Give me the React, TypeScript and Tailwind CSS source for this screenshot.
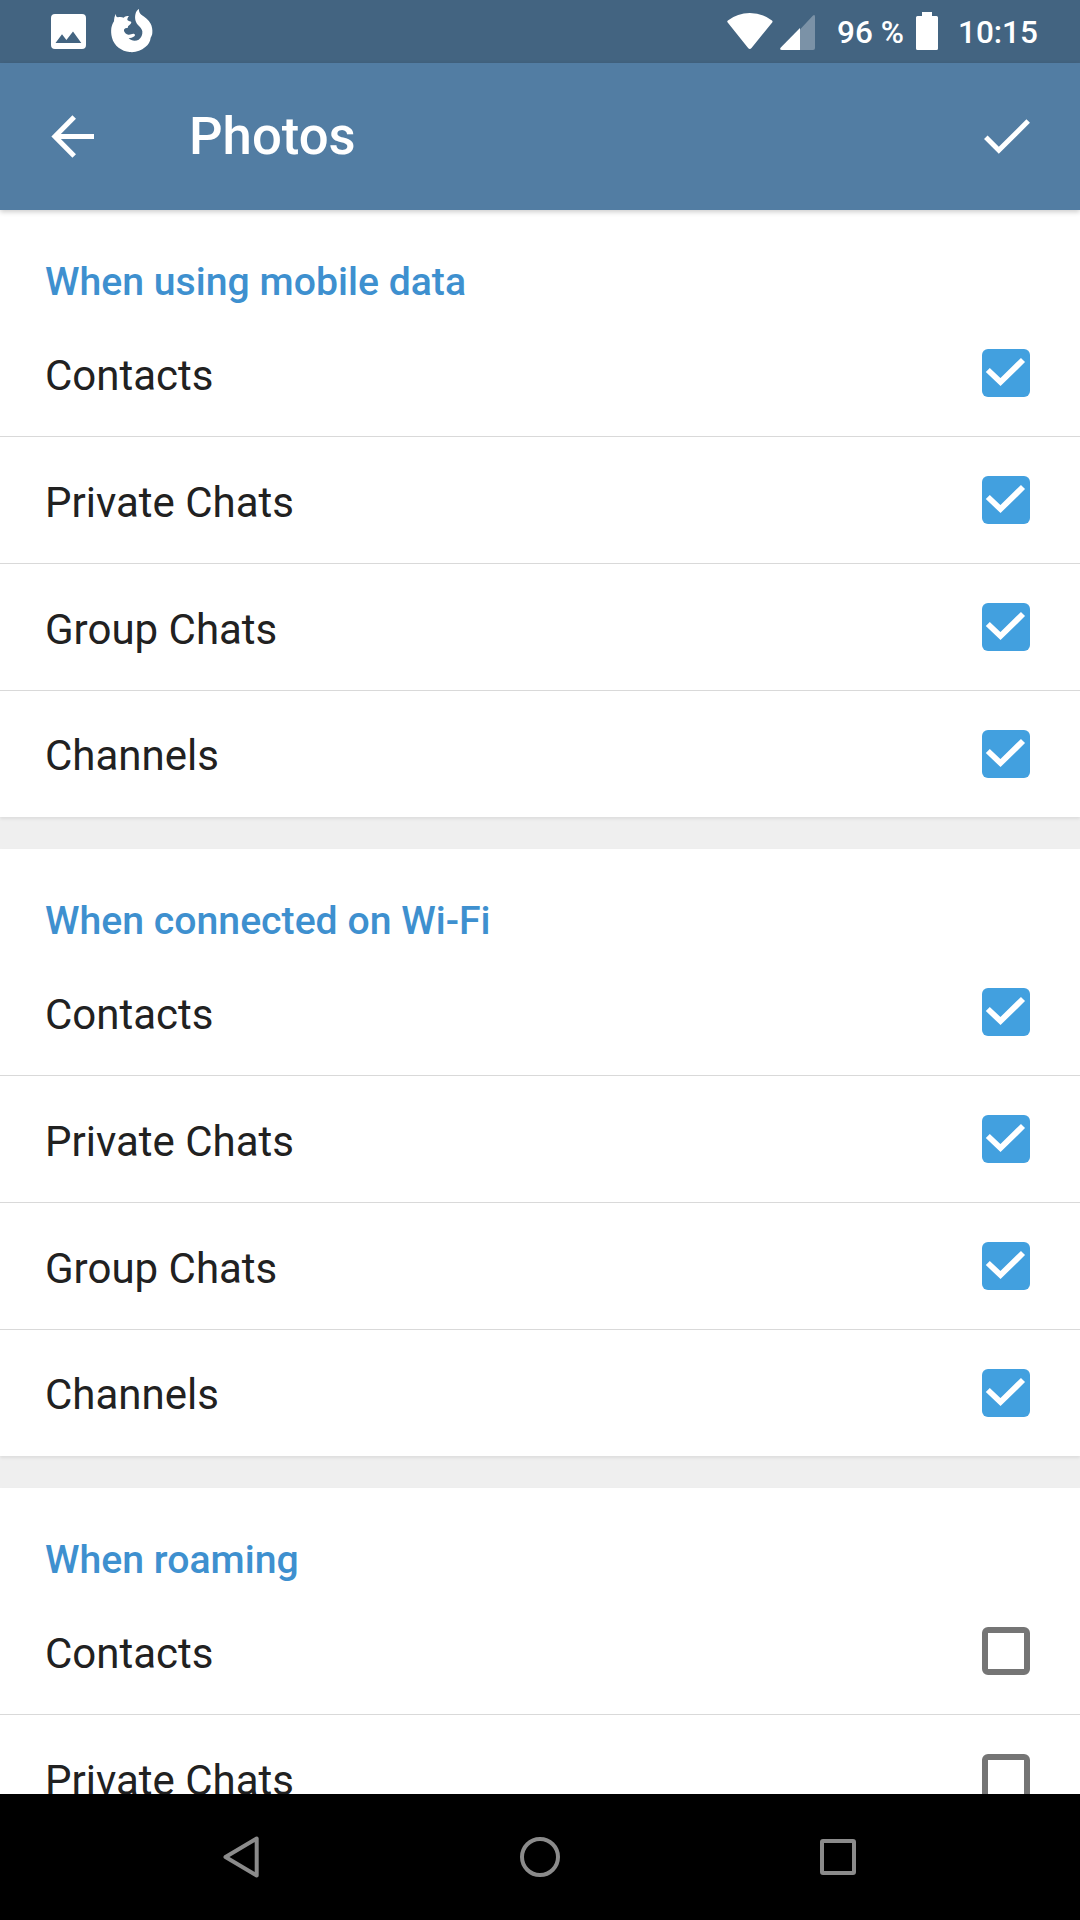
const CHATS = ['Contacts', 'Private Chats', 'Group Chats', 'Channels'];

const SECTIONS = [
  { title: 'When using mobile data', checked: true },
  { title: 'When connected on Wi-Fi', checked: true },
  { title: 'When roaming', checked: false },
];

function StatusBar() {
  return (
    <div className="flex h-[63px] shrink-0 items-start bg-[#436481] text-white">
      <svg className="ml-[51px] mt-[14px] h-[35px] w-[35px]" viewBox="0 0 35 35" fill="currentColor">
        <path
          fillRule="evenodd"
          d="M4 0h27a4 4 0 0 1 4 4v27a4 4 0 0 1-4 4H4a4 4 0 0 1-4-4V4a4 4 0 0 1 4-4zM4.500 29h25.800L22 17.500l-6.600 8.600L11 20.300z"
        />
      </svg>
      <svg className="ml-[25px] mt-[9px] h-[44px] w-[42px]" viewBox="0 0 126 132" fill="currentColor">
        <path d="M15 14C14 20 16 24 21 25C27 23 33 24 38 26C42 22 48 21 54 21C50 25 49 29 49 33C53 37 59 37 61 39C61 45 56 47 51 52C51 57 50 57 47 57C41 58 38 61 39 66C41 72 46 76 52 77C59 78 63 73 70 75C73 77 72 80 70 82C66 86 58 87 53 88C61 96 74 97 83 92C91 87 95 77 94 67C93 60 87 54 81 48C72 39 70 24 75 10C77 5 81 2 84 0C83 7 86 14 92 18C102 25 113 32 119 44C123 52 125 62 124 71C124 77 121 82 119 86C118 97 112 108 103 114C90 125 73 131 56 129C32 127 9 110 3 86C0 75 0 66 1 57C3 49 5 43 9 37C9 29 11 20 15 14Z" />
      </svg>
      <svg className="ml-[574px] mt-[13px] h-[37px] w-[46px]" viewBox="0 0 46 37" fill="currentColor">
        <path d="M.7 9.500Q-.3 8.500.9 7.500Q10.500 0 22.800 0T45 7.500Q46 8.500 45.200 9.500L24.500 35Q22.800 37 21.100 35z" />
      </svg>
      <svg className="ml-[7px] mt-[15px] h-[35px] w-[35px]" viewBox="0 0 35 35" fill="currentColor">
        <path opacity=".3" d="M20 14.500L33 .6q2-1.500 2 1.400v31q0 2-2 2H20z" />
        <path d="M20 13L.8 32.500Q-1 35 2 35h18z" />
      </svg>
      <span className="ml-[22px] w-[79px] whitespace-nowrap text-[31.500px] leading-[66px] font-medium">96 %</span>
      <svg className="mt-[12px] h-[38px] w-[22px]" viewBox="0 0 22 38" fill="currentColor">
        <path d="M6 0h10v4h4.500Q22 4 22 5.500v31q0 1.500-1.500 1.500h-19Q0 38 0 36.500v-31Q0 4 1.500 4H6z" />
      </svg>
      <span className="ml-[20px] whitespace-nowrap text-[31.500px] leading-[66px] font-medium">10:15</span>
    </div>
  );
}

function AppBar() {
  return (
    <header className="relative z-10 flex h-[147px] shrink-0 items-center bg-[#527da3] pr-[50px] pl-[51px] text-white shadow-[0_2px_5px_rgba(0,0,0,0.2)]">
      <svg className="h-[43px] w-[43px]" viewBox="0 0 43 43" fill="none" stroke="currentColor" strokeWidth="5">
        <path d="M43 21.500H4.500M23.200 2L3.900 21.500L23.200 41" />
      </svg>
      <h1 className="ml-[95px] text-[52.700px] leading-none font-medium">Photos</h1>
      <svg className="ml-auto h-[36px] w-[46px]" viewBox="0 0 46 36" fill="none" stroke="currentColor" strokeWidth="5">
        <path d="M1.800 18.300L14.800 31.300L44.200 2" />
      </svg>
    </header>
  );
}

function Checkbox({ checked }: { checked: boolean }) {
  if (!checked) return <span className="h-12 w-12 rounded-[6px] border-6 border-[#757575]" />;
  return (
    <span className="h-12 w-12 rounded-[6px] bg-[#42a0df] text-white">
      <svg className="h-12 w-12" viewBox="0 0 48 48" fill="none" stroke="currentColor" strokeWidth="5.800">
        <path d="M5.800 21L18.500 33L41 11" />
      </svg>
    </span>
  );
}

function Section({ title, checked }: { title: string; checked: boolean }) {
  return (
    <section className="shrink-0 bg-white shadow-[0_2px_3px_rgba(0,0,0,0.08)]">
      <h2 className="flex h-[100px] items-end px-[45px] pb-[5px] text-[39.200px] leading-[46px] font-medium text-[#3e90cf]">
        {title}
      </h2>
      <ul>
        {CHATS.map((chat) => (
          <li
            key={chat}
            className="group flex h-[127px] items-center justify-between border-b border-[#d9d9d9] pr-[50px] pl-[45px] last:h-[126px] last:border-b-0"
          >
            <span className="pt-[6px] text-[42px] leading-[50px] text-[#212121] group-last:pt-1">{chat}</span>
            <Checkbox checked={checked} />
          </li>
        ))}
      </ul>
    </section>
  );
}

function NavigationBar() {
  return (
    <nav className="flex h-[126px] shrink-0 items-center bg-black text-[#8b8b8b]">
      <svg className="ml-[223px] h-[42px] w-[36px]" viewBox="0 0 36 42" fill="none" stroke="currentColor" strokeWidth="4" strokeLinejoin="round">
        <path d="M33.700 2.500v37L2.500 21z" />
      </svg>
      <span className="ml-[261px] h-10 w-10 rounded-full border-4 border-current" />
      <span className="ml-[260px] h-9 w-9 rounded-[3px] border-4 border-current" />
    </nav>
  );
}

export default function App() {
  return (
    <div className="flex h-[1920px] w-[1080px] flex-col overflow-hidden font-['Roboto',sans-serif]">
      <StatusBar />
      <AppBar />
      <main className="flex min-h-0 flex-1 flex-col gap-8 overflow-hidden bg-[#efefef]">
        {SECTIONS.map((section) => (
          <Section key={section.title} {...section} />
        ))}
      </main>
      <NavigationBar />
    </div>
  );
}
